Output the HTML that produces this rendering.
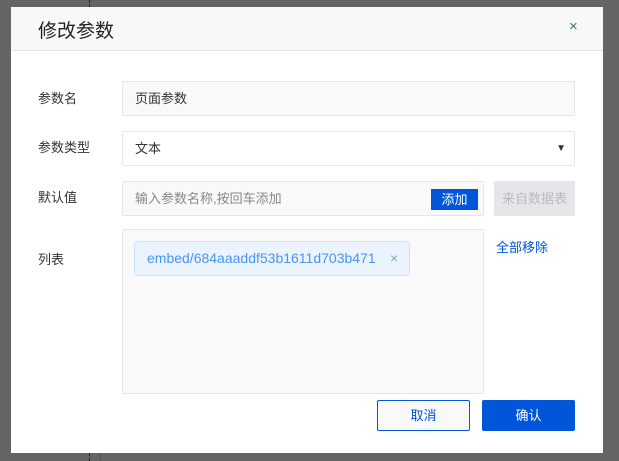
<!DOCTYPE html>
<html><head><meta charset="utf-8"><style>
body{margin:0;width:619px;height:461px;background:#646464;position:relative;overflow:hidden;font-family:"Liberation Sans","Noto Sans CJK SC",sans-serif;}
.a{position:absolute;box-sizing:border-box}
.dash{position:absolute;left:89px;width:0;border-left:1px dashed #222}
.dlg{left:11px;top:7px;width:592px;height:446px;background:#fff}
.hd{left:0;top:0;width:592px;height:44px;background:#f8f8f8;border-bottom:1px solid #e4e4e4}
.lbl{font-size:13px;color:#333}
.inp{background:#f9f9f9;border:1px solid #e6e6e6;border-radius:2px;font-size:13px;color:#333;padding-left:12px;line-height:34px}
</style></head><body>
<div class="dash" style="top:0;height:7px"></div>
<div class="dash" style="top:453px;height:8px"></div>
<div class="a" style="left:100px;top:453px;width:1px;height:8px;background:#555"></div>
<div class="a dlg">
 <div class="a hd"><div class="a" style="left:27px;top:9px;font-size:19px;color:#222">修改参数</div>
  <div class="a" style="left:558px;top:11px;font-size:15px;color:#3a7a5a">×</div></div>
 <div class="a lbl" style="left:27px;top:81px">参数名</div>
 <div class="a lbl" style="left:27px;top:130px">参数类型</div>
 <div class="a lbl" style="left:27px;top:180px">默认值</div>
 <div class="a lbl" style="left:27px;top:242px">列表</div>
 <div class="a inp" style="left:111px;top:74px;width:453px;height:35px">页面参数</div>
 <div class="a inp" style="left:111px;top:124px;width:453px;height:35px;background:#fff">文本<span style="position:absolute;right:8px;top:0;font-size:10px">▼</span></div>
 <div class="a inp" style="left:111px;top:174px;width:362px;height:35px;color:#888">输入参数名称,按回车添加</div>
 <div class="a" style="left:420px;top:182px;width:47px;height:21px;background:#0055d9;color:#fff;font-size:13px;text-align:center;line-height:21px">添加</div>
 <div class="a" style="left:483px;top:174px;width:81px;height:35px;background:#e4e6ea;border-radius:2px;color:#bbb;font-size:13px;text-align:center;line-height:35px">来自数据表</div>
 <div class="a inp" style="left:111px;top:222px;width:362px;height:165px"></div>
 <div class="a" style="left:123px;top:234px;width:276px;height:35px;background:#eaf3fe;border:1px solid #cfe3fb;border-radius:3px;color:#4a96ee;font-size:14px;line-height:33px;padding-left:12px">embed/684aaaddf53b1611d703b471<span style="position:absolute;left:255px;color:#7ab">×</span></div>
 <div class="a" style="left:485px;top:230px;color:#0055d9;font-size:13px">全部移除</div>
 <div class="a" style="left:366px;top:393px;width:93px;height:31px;border:1px solid #0055d9;border-radius:2px;background:#f9f9f9;color:#0055d9;font-size:13px;text-align:center;line-height:29px">取消</div>
 <div class="a" style="left:471px;top:393px;width:93px;height:31px;background:#0055d9;border-radius:2px;color:#fff;font-size:13px;text-align:center;line-height:31px">确认</div>
</div>
</body></html>
